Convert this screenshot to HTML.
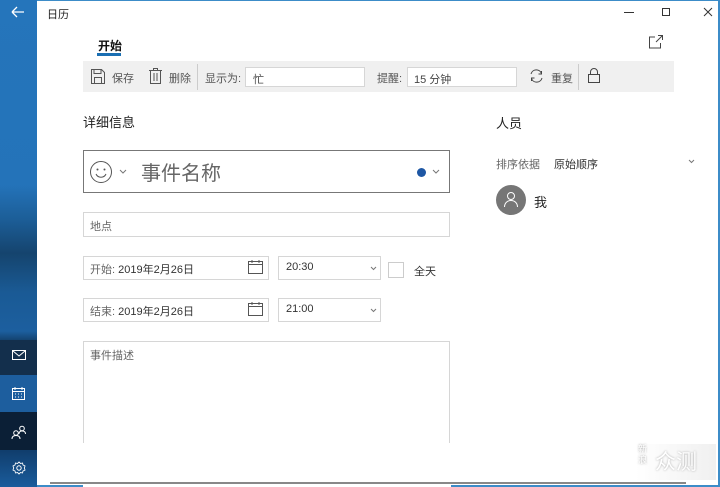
<!DOCTYPE html>
<html><head><meta charset="utf-8"><style>
*{margin:0;padding:0;box-sizing:border-box}
body{width:720px;height:487px;overflow:hidden;background:#fff;font-family:"Liberation Sans","Noto Sans CJK SC",sans-serif;color:#333;position:relative;font-size:11px}
.a{position:absolute}
.side{left:0;top:0;width:37px;height:487px;background:linear-gradient(180deg,#2575bb 0%,#2473b9 38%,#1c5e98 45%,#15446e 52%,#1a5a95 60%,#1c5f9f 68%,#13406c 70%)}
.box{border:1px solid #d6d6d6;background:#fff}
.lbl{color:#555}
</style></head><body>
<div class="a side"></div>
<div class="a" style="left:0;top:340px;width:37px;height:35px;background:#132f4c"></div>
<div class="a" style="left:0;top:375px;width:37px;height:37px;background:#1d5e9e"></div>
<div class="a" style="left:0;top:412px;width:37px;height:38px;background:#0b1f36"></div>
<div class="a" style="left:0;top:450px;width:37px;height:37px;background:linear-gradient(#103d6c,#1a5c9c)"></div>
<svg class="a" style="left:10px;top:6px" width="16" height="12"><path d="M2 6H14M2 6L7 1M2 6L7 11" stroke="#fff" stroke-width="1.3" fill="none"/></svg>
<svg class="a" style="left:12px;top:350px" width="14" height="11"><rect x="0.5" y="0.5" width="13" height="9" fill="none" stroke="#fff"/><path d="M1 1L7 6L13 1" fill="none" stroke="#fff"/></svg>
<svg class="a" style="left:12px;top:387px" width="14" height="13"><rect x="0.5" y="1.5" width="12" height="11" fill="none" stroke="#fff"/><path d="M1 4.5H12M3 7h1M6 7h1M9 7h1M3 10h1M6 10h1M9 10h1M3 0v3M10 0v3" stroke="#fff"/></svg>
<svg class="a" style="left:11px;top:425px" width="16" height="14"><circle cx="5" cy="8" r="2.3" fill="none" stroke="#fff"/><path d="M1 14c0-3 2-3.5 4-3.5s4 .5 4 3.5" fill="none" stroke="#fff"/><circle cx="11" cy="3.5" r="2.3" fill="none" stroke="#fff"/><path d="M8 9c0-2.5 1.5-3 3-3s3.5.5 3.5 3" fill="none" stroke="#fff"/></svg>
<svg class="a" style="left:12px;top:461px" width="14" height="14"><circle cx="7" cy="7" r="2.2" fill="none" stroke="#fff"/><path d="M7 1L8.5 2.5 10.5 2 11 4 13 5 12.3 7 13 9 11 10 10.5 12 8.5 11.5 7 13 5.5 11.5 3.5 12 3 10 1 9 1.7 7 1 5 3 4 3.5 2 5.5 2.5Z" fill="none" stroke="#fff" stroke-width=".9"/></svg>
<div class="a" style="left:718px;top:0;width:2px;height:487px;background:#3c8cc8"></div>
<div class="a" style="left:37px;top:0;width:683px;height:1px;background:#3c8cc8"></div>
<div class="a" style="left:37px;top:485px;width:683px;height:2px;background:#3c8cc8"></div>
<div class="a" style="left:47px;top:6px;font-size:11px;color:#222">日历</div>
<div class="a" style="left:624px;top:12px;width:10px;height:1px;background:#333"></div>
<div class="a" style="left:662px;top:8px;width:8px;height:8px;border:1px solid #333"></div>
<svg class="a" style="left:703px;top:7px" width="10" height="10"><path d="M1 1L9 9M9 1L1 9" stroke="#333"/></svg>
<div class="a" style="left:98px;top:37px;font-size:12px;font-weight:bold;color:#111">开始</div>
<div class="a" style="left:97px;top:53px;width:24px;height:3px;background:#1a6fb3"></div>
<svg class="a" style="left:648px;top:34px" width="16" height="16"><path d="M10 1.5h4.5V6M14.5 1.5L8 8M7 3H1.5v11h11V9" fill="none" stroke="#444"/></svg>
<div class="a" style="left:83px;top:61px;width:591px;height:31px;background:#f0f0f0"></div>
<svg class="a" style="left:91px;top:69px" width="14" height="15"><path d="M0.5 0.5h10l3 3v11h-13z" fill="none" stroke="#555"/><rect x="3.5" y="8.5" width="7" height="6" fill="none" stroke="#555"/><path d="M3 .5v4h7v-4" fill="none" stroke="#555"/></svg>
<div class="a lbl" style="left:112px;top:70px">保存</div>
<svg class="a" style="left:149px;top:68px" width="13" height="16"><path d="M0 2.5h13M4.5 2.5V.5h4v2M1.5 2.5v13h10v-13M5 5v8M8 5v8" fill="none" stroke="#555"/></svg>
<div class="a lbl" style="left:169px;top:70px">删除</div>
<div class="a" style="left:197px;top:64px;width:1px;height:26px;background:#ccc"></div>
<div class="a lbl" style="left:205px;top:70px">显示为:</div>
<div class="a box" style="left:245px;top:67px;width:120px;height:20px;padding:3px 7px;color:#444">忙</div>
<div class="a lbl" style="left:377px;top:70px">提醒:</div>
<div class="a box" style="left:407px;top:67px;width:110px;height:20px;padding:3px 6px;color:#444">15 分钟</div>
<svg class="a" style="left:529px;top:69px" width="15" height="14"><path d="M2 5A5.5 5.5 0 0 1 12.5 4.5M13 9A5.5 5.5 0 0 1 2.5 9.5" fill="none" stroke="#444"/><path d="M12.5 2v3h-3" fill="none" stroke="#444"/><path d="M2.5 12v-3h3" fill="none" stroke="#444"/></svg>
<div class="a lbl" style="left:551px;top:70px">重复</div>
<div class="a" style="left:578px;top:64px;width:1px;height:26px;background:#ccc"></div>
<svg class="a" style="left:588px;top:68px" width="12" height="16"><rect x="0.5" y="6.5" width="11" height="8" fill="none" stroke="#444"/><path d="M2.5 6.5V4a3.5 3.5 0 0 1 7 0v2.5" fill="none" stroke="#444"/></svg>
<div class="a" style="left:83px;top:112px;font-size:13px;color:#222">详细信息</div>
<div class="a" style="left:83px;top:150px;width:367px;height:43px;border:1px solid #777"></div>
<svg class="a" style="left:89px;top:160px" width="24" height="24"><circle cx="12" cy="12" r="10.5" fill="none" stroke="#555"/><circle cx="8.5" cy="9.5" r="1" fill="#555"/><circle cx="15.5" cy="9.5" r="1" fill="#555"/><path d="M7 14a5.5 5.5 0 0 0 10 0" fill="none" stroke="#555"/></svg>
<svg class="a" style="left:119px;top:169px" width="8" height="6"><path d="M1 1L4 4L7 1" fill="none" stroke="#777"/></svg>
<div class="a" style="left:141px;top:157px;font-size:20px;color:#666">事件名称</div>
<div class="a" style="left:417px;top:168px;width:9px;height:9px;border-radius:50%;background:#1e57a4"></div>
<svg class="a" style="left:432px;top:169px" width="8" height="6"><path d="M1 1L4 4L7 1" fill="none" stroke="#777"/></svg>
<div class="a box" style="left:83px;top:212px;width:367px;height:25px;padding:5px 6px;color:#666">地点</div>
<div class="a box" style="left:83px;top:256px;width:186px;height:24px;padding:4px 6px;color:#666">开始: <span style="color:#333">2019年2月26日</span></div>
<svg class="a" style="left:248px;top:260px" width="15" height="14"><rect x="0.5" y="1.5" width="14" height="12" fill="none" stroke="#555"/><path d="M1 4.5h13M4 0v3M11 0v3" stroke="#555"/></svg>
<div class="a box" style="left:278px;top:256px;width:103px;height:24px;padding:4px 7px;color:#333">20:30</div>
<svg class="a" style="left:370px;top:266px" width="7" height="5"><path d="M1 1L3.5 3.5L6 1" fill="none" stroke="#777"/></svg>
<div class="a" style="left:388px;top:262px;width:16px;height:16px;border:1px solid #ccc"></div>
<div class="a" style="left:414px;top:263px;color:#333">全天</div>
<div class="a box" style="left:83px;top:298px;width:186px;height:24px;padding:4px 6px;color:#666">结束: <span style="color:#333">2019年2月26日</span></div>
<svg class="a" style="left:248px;top:302px" width="15" height="14"><rect x="0.5" y="1.5" width="14" height="12" fill="none" stroke="#555"/><path d="M1 4.5h13M4 0v3M11 0v3" stroke="#555"/></svg>
<div class="a box" style="left:278px;top:298px;width:103px;height:24px;padding:4px 7px;color:#333">21:00</div>
<svg class="a" style="left:370px;top:308px" width="7" height="5"><path d="M1 1L3.5 3.5L6 1" fill="none" stroke="#777"/></svg>
<div class="a" style="left:83px;top:341px;width:367px;height:110px;border:1px solid #d6d6d6;border-bottom:none;padding:5px 6px;color:#666">事件描述</div>
<div class="a" style="left:83px;top:443px;width:368px;height:44px;background:#fff"></div>
<div class="a" style="left:496px;top:113px;font-size:13px;color:#222">人员</div>
<div class="a" style="left:496px;top:156px;color:#666">排序依据</div>
<div class="a" style="left:554px;top:156px;color:#333">原始顺序</div>
<svg class="a" style="left:688px;top:159px" width="7" height="5"><path d="M1 1L3.5 3.5L6 1" fill="none" stroke="#777"/></svg>
<div class="a" style="left:496px;top:185px;width:30px;height:30px;border-radius:50%;background:#767676"></div>
<svg class="a" style="left:503px;top:191px" width="16" height="17"><circle cx="8" cy="5" r="3.5" fill="none" stroke="#fff"/><path d="M1.5 16c0-4 3-6.5 6.5-6.5s6.5 2.5 6.5 6.5" fill="none" stroke="#fff"/></svg>
<div class="a" style="left:534px;top:192px;font-size:13px;color:#222">我</div>
<div class="a" style="left:636px;top:444px;width:80px;height:36px;background:linear-gradient(90deg,rgba(235,235,235,0),rgba(225,225,225,.5))"></div>
<div class="a" style="left:638px;top:444px;font-size:9px;line-height:11px;color:#fff;width:11px;text-shadow:0 0 2px #999">新浪</div>
<div class="a" style="left:655px;top:446px;font-size:21px;color:#fff;text-shadow:0 0 2px #aaa">众测</div>
<div class="a" style="left:50px;top:482px;width:636px;height:2px;background:#888"></div>
</body></html>
